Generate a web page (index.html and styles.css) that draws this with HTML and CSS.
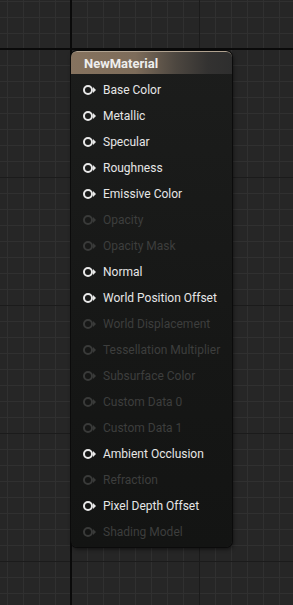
FILE: index.html
```html
<!DOCTYPE html>
<html lang="en">

<head>
    <meta charset="UTF-8">
    <meta name="viewport" content="width=device-width, initial-scale=1.0">
    <title>Material Graph</title>
    <link rel="stylesheet" href="styles.css">
</head>

<body>
    <div class="graph">
        <div class="node">
            <div class="node-title">NewMaterial</div>
            <ul class="pins">
                <li class="pin"><span class="pin-icon"></span>Base Color</li>
                <li class="pin"><span class="pin-icon"></span>Metallic</li>
                <li class="pin"><span class="pin-icon"></span>Specular</li>
                <li class="pin"><span class="pin-icon"></span>Roughness</li>
                <li class="pin"><span class="pin-icon"></span>Emissive Color</li>
                <li class="pin off"><span class="pin-icon"></span>Opacity</li>
                <li class="pin off"><span class="pin-icon"></span>Opacity Mask</li>
                <li class="pin"><span class="pin-icon"></span>Normal</li>
                <li class="pin"><span class="pin-icon"></span>World Position Offset</li>
                <li class="pin off"><span class="pin-icon"></span>World Displacement</li>
                <li class="pin off"><span class="pin-icon"></span>Tessellation Multiplier</li>
                <li class="pin off"><span class="pin-icon"></span>Subsurface Color</li>
                <li class="pin off"><span class="pin-icon"></span>Custom Data 0</li>
                <li class="pin off"><span class="pin-icon"></span>Custom Data 1</li>
                <li class="pin"><span class="pin-icon"></span>Ambient Occlusion</li>
                <li class="pin off"><span class="pin-icon"></span>Refraction</li>
                <li class="pin"><span class="pin-icon"></span>Pixel Depth Offset</li>
                <li class="pin off"><span class="pin-icon"></span>Shading Model</li>
            </ul>
        </div>
    </div>
</body>

</html>
```

FILE: styles.css
```css
html,
body {
    margin: 0;
    height: 100%;
}

body {
    background-color: #262626;
    font-family: Roboto, "Liberation Sans", sans-serif;
}

/* graph canvas: origin axes, 128px sections, 16px cells */
.graph {
    height: 100%;
    box-sizing: border-box;
    padding: 51px 0 0 71px;
    background-color: #262626;
    background-image:
        linear-gradient(to right, transparent 70px, #0a0a0a 70px, #0a0a0a 72px, transparent 72px),
        linear-gradient(to bottom, transparent 48px, #0a0a0a 48px, #0a0a0a 50px, transparent 50px),
        linear-gradient(to right, #1b1b1b 1px, transparent 1px),
        linear-gradient(to bottom, #1b1b1b 1px, transparent 1px),
        linear-gradient(to right, #303030 1px, transparent 1px),
        linear-gradient(to bottom, #303030 1px, transparent 1px);
    background-repeat: no-repeat, no-repeat, repeat, repeat, repeat, repeat;
    background-size: 100% 100%, 100% 100%, 128px 128px, 128px 128px, 16px 16px, 16px 16px;
    background-position: 0 0, 0 0, 71px 0, 0 49px, 7px 0, 0 1px;
}

.node {
    width: 161px;
    height: 496px;
    box-sizing: border-box;
    background: linear-gradient(to bottom, #1c1d1c, #161716 60%, #131413);
    border-radius: 6px;
    box-shadow: 0 0 0 1px #0b0b0b, 1px 2px 4px rgba(0, 0, 0, 0.6);
    overflow: hidden;
}

.node-title {
    height: 22px;
    padding-left: 13px;
    line-height: 23px;
    font-size: 13px;
    font-weight: bold;
    color: #eeeeee;
    background: linear-gradient(to right, #86735f 0%, #7d6c5a 40%, #4d4740 65%, #333231 85%, #2e2e2e 100%);
    border-top: 1px solid #b0a290;
    border-radius: 6px 6px 0 0;
}

.pins {
    list-style-type: none;
    margin: 0;
    padding: 3px 0 0 0;
}

.pin {
    display: flex;
    align-items: center;
    height: 26px;
    padding-left: 12px;
    font-size: 12px;
    color: #e6e6e6;
}

.pin.off {
    color: #3d3e3d;
}

.pin-icon {
    position: relative;
    width: 6px;
    height: 6px;
    border: 2px solid #e8e8e8;
    border-radius: 50%;
    margin-right: 10px;
}

.pin-icon::after {
    content: "";
    position: absolute;
    left: 8px;
    top: 0px;
    border-left: 3px solid #e8e8e8;
    border-top: 3px solid transparent;
    border-bottom: 3px solid transparent;
}

.pin.off .pin-icon {
    border-color: #393a39;
}

.pin.off .pin-icon::after {
    border-left-color: #393a39;
}
```
